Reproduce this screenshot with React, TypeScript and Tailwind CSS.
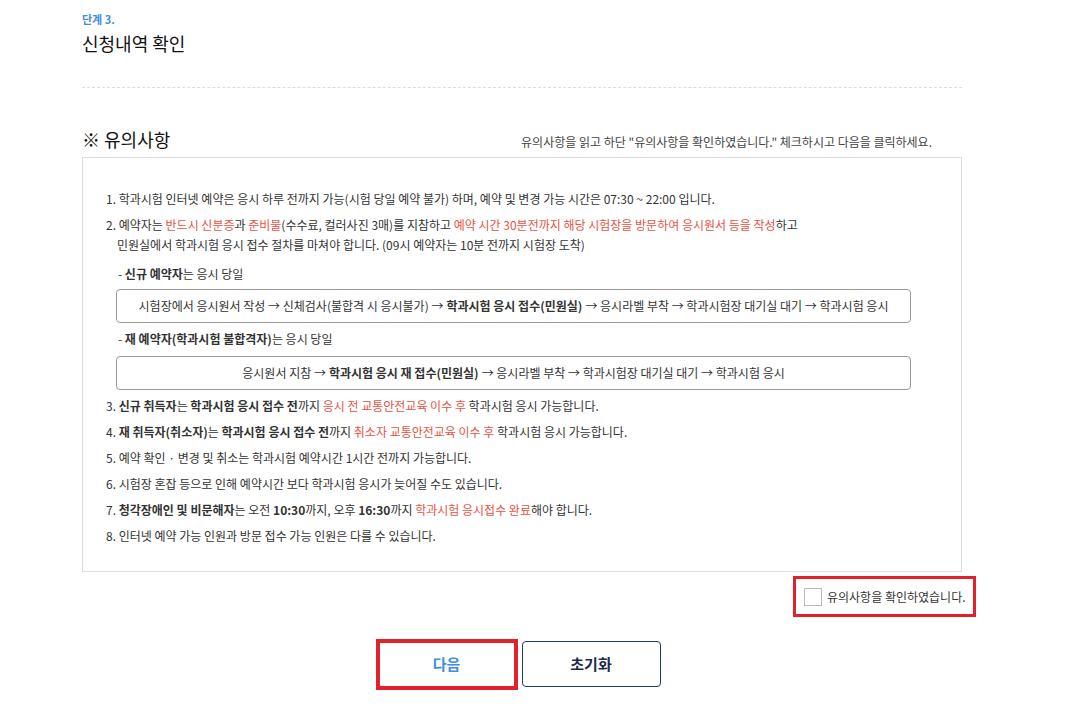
import { useState } from "react";

const red = "text-[#e9533f]";

function Flow({ children }: { children: React.ReactNode }) {
  return (
    <div className="ml-[10px] w-[795px] h-[34px] border border-[#9a9a9a] rounded-[4px] flex items-center justify-center text-[12px] text-[#333]">
      {children}
    </div>
  );
}

export default function App() {
  const [checked, setChecked] = useState(false);

  return (
    <div className="bg-white min-h-[718px] text-[#333]" style={{ fontFamily: '"Noto Sans CJK KR", "Noto Sans", sans-serif' }}>
      <div className="w-[880px] ml-[82px] pt-[11px]">
        {/* 제목 */}
        <p className="text-[11px] font-bold text-[#3f8ee0] leading-[16px]">단계 3.</p>
        <h2 className="text-[18px] text-[#111] leading-[26px] mt-[3px]">신청내역 확인</h2>
        <div className="mt-[31px] border-t border-dashed border-[#dcdcdc]" />

        {/* 유의사항 헤더 */}
        <div className="mt-[38px] flex items-end justify-between">
          <h3 className="text-[18px] text-[#111] leading-[26px]">※ 유의사항</h3>
          <p className="text-[12px] text-[#444] mr-[30px] mb-[1px]">
            유의사항을 읽고 하단 "유의사항을 확인하였습니다." 체크하시고 다음을 클릭하세요.
          </p>
        </div>

        {/* 본문 박스 */}
        <div className="mt-[5px] h-[415px] border border-[#dddddd] pl-[23px] pt-[31px] text-[12px] leading-[20px] text-[#333]">
          <p>1. 학과시험 인터넷 예약은 응시 하루 전까지 가능(시험 당일 예약 불가) 하며, 예약 및 변경 가능 시간은 07:30 ~ 22:00 입니다.</p>
          <p className="mt-[6px]">
            2. 예약자는 <span className={red}>반드시 신분증</span>과 <span className={red}>준비물</span>(수수료, 컬러사진 3매)를 지참하고{" "}
            <span className={red}>예약 시간 30분전까지 해당 시험장을 방문하여 응시원서 등을 작성</span>하고
          </p>
          <p className="pl-[11px]">민원실에서 학과시험 응시 접수 절차를 마쳐야 합니다. (09시 예약자는 10분 전까지 시험장 도착)</p>
          <p className="mt-[9px] pl-[12px]">
            - <b>신규 예약자</b>는 응시 당일
          </p>
          <div className="mt-[5px]">
            <Flow>
              시험장에서 응시원서 작성 → 신체검사(불합격 시 응시불가) → <b className="mx-[3px]">학과시험 응시 접수(민원실)</b> → 응시라벨 부착 → 학과시험장 대기실 대기 → 학과시험 응시
            </Flow>
          </div>
          <p className="mt-[6px] pl-[12px]">
            - <b>재 예약자(학과시험 불합격자)</b>는 응시 당일
          </p>
          <div className="mt-[7px]">
            <Flow>
              응시원서 지참 → <b className="mx-[3px]">학과시험 응시 재 접수(민원실)</b> → 응시라벨 부착 → 학과시험장 대기실 대기 → 학과시험 응시
            </Flow>
          </div>
          <p className="mt-[6px]">
            3. <b>신규 취득자</b>는 <b>학과시험 응시 접수 전</b>까지 <span className={red}>응시 전 교통안전교육 이수 후</span> 학과시험 응시 가능합니다.
          </p>
          <p className="mt-[6px]">
            4. <b>재 취득자(취소자)</b>는 <b>학과시험 응시 접수 전</b>까지 <span className={red}>취소자 교통안전교육 이수 후</span> 학과시험 응시 가능합니다.
          </p>
          <p className="mt-[6px]">5. 예약 확인 · 변경 및 취소는 학과시험 예약시간 1시간 전까지 가능합니다.</p>
          <p className="mt-[6px]">6. 시험장 혼잡 등으로 인해 예약시간 보다 학과시험 응시가 늦어질 수도 있습니다.</p>
          <p className="mt-[6px]">
            7. <b>청각장애인 및 비문해자</b>는 오전 <b>10:30</b>까지, 오후 <b>16:30</b>까지 <span className={red}>학과시험 응시접수 완료</span>해야 합니다.
          </p>
          <p className="mt-[6px]">8. 인터넷 예약 가능 인원과 방문 접수 가능 인원은 다를 수 있습니다.</p>
        </div>

        {/* 확인 체크 */}
        <div className="flex justify-end mr-[-14px] mt-[4px]">
          <label className="w-[183px] h-[41px] border-[3px] border-[#e2222b] flex items-center pl-[8px] gap-[5px] cursor-pointer">
            <input
              type="checkbox"
              checked={checked}
              onChange={(e) => setChecked(e.target.checked)}
              className="appearance-none w-[18px] h-[18px] border border-[#bbbbbb] bg-white checked:bg-[#3f8ee0]"
            />
            <span className="text-[12px] text-[#333]">유의사항을 확인하였습니다.</span>
          </label>
        </div>

        {/* 버튼 */}
        <div className="mt-[22px] flex justify-center gap-[4px] pr-[8px]">
          <div className="w-[142px] h-[51px] border-[4px] border-[#e2222b] bg-white flex items-center justify-center">
            <button type="button" className="w-[128px] h-[40px] rounded-[4px] text-[15px] font-bold text-[#3f8ee0]">
              다음
            </button>
          </div>
          <button
            type="button"
            className="w-[139px] h-[46px] mt-[2px] rounded-[4px] border border-[#1d3a6a] bg-white text-[15px] font-bold text-[#1d2a4a]"
          >
            초기화
          </button>
        </div>
      </div>
    </div>
  );
}
